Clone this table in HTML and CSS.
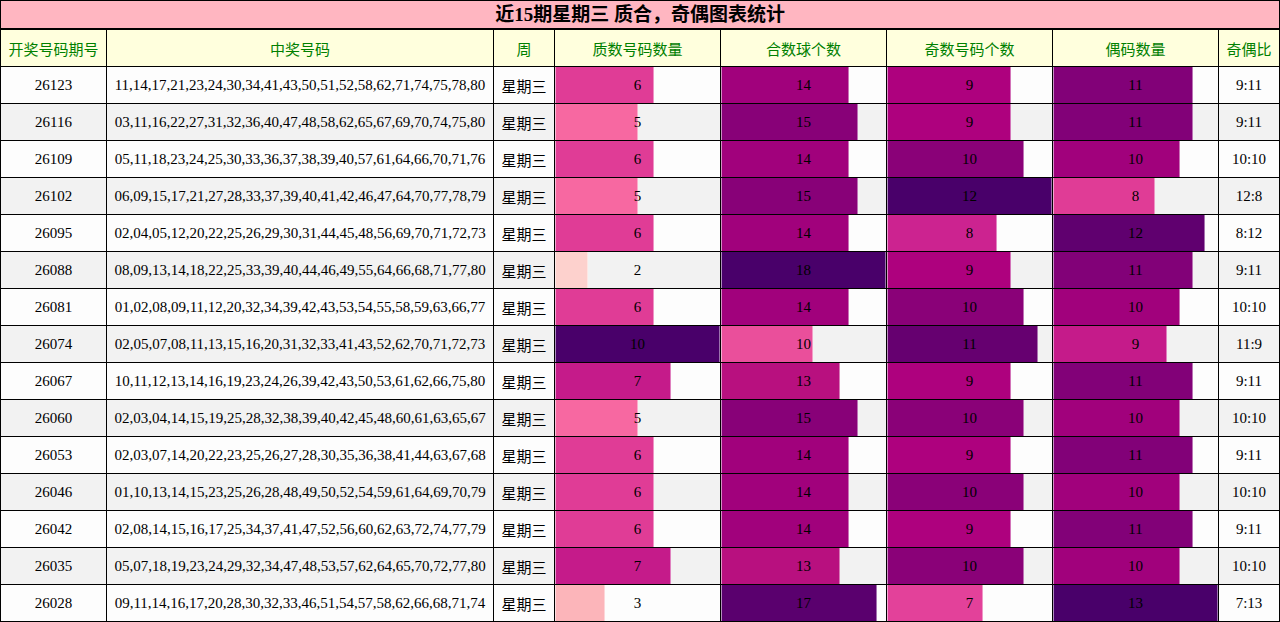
FILE: index.html
```html
<!DOCTYPE html>
<html lang="zh">
<head>
<meta charset="utf-8">
<title>近15期星期三 质合，奇偶图表统计</title>
<link rel="stylesheet" href="styles.css">
</head>
<body>
<table class="stats">
  <colgroup>
    <col class="c-issue"><col class="c-nums"><col class="c-week">
    <col class="c-bar"><col class="c-bar"><col class="c-bar"><col class="c-bar">
    <col class="c-ratio">
  </colgroup>
  <thead>
    <tr class="title-row"><th colspan="8">近15期星期三 质合，奇偶图表统计</th></tr>
    <tr class="head-row">
      <th>开奖号码期号</th><th>中奖号码</th><th>周</th><th>质数号码数量</th><th>合数球个数</th><th>奇数号码个数</th><th>偶码数量</th><th>奇偶比</th>
    </tr>
  </thead>
  <tbody>
    <tr>
      <td>26123</td><td>11,14,17,21,23,24,30,34,41,43,50,51,52,58,62,71,74,75,78,80</td><td class="wk">星期三</td>
      <td class="bar"><div class="wrap"><div class="fill" style="width:60%;background:#e03c96"></div><span class="lbl">6</span></div></td>
      <td class="bar"><div class="wrap"><div class="fill" style="width:77.78%;background:#a1017c"></div><span class="lbl">14</span></div></td>
      <td class="bar"><div class="wrap"><div class="fill" style="width:75%;background:#ae017e"></div><span class="lbl">9</span></div></td>
      <td class="bar"><div class="wrap"><div class="fill" style="width:84.62%;background:#820178"></div><span class="lbl">11</span></div></td>
      <td>9:11</td>
    </tr>
    <tr>
      <td>26116</td><td>03,11,16,22,27,31,32,36,40,47,48,58,62,65,67,69,70,74,75,80</td><td class="wk">星期三</td>
      <td class="bar"><div class="wrap"><div class="fill" style="width:50%;background:#f768a1"></div><span class="lbl">5</span></div></td>
      <td class="bar"><div class="wrap"><div class="fill" style="width:83.33%;background:#880178"></div><span class="lbl">15</span></div></td>
      <td class="bar"><div class="wrap"><div class="fill" style="width:75%;background:#ae017e"></div><span class="lbl">9</span></div></td>
      <td class="bar"><div class="wrap"><div class="fill" style="width:84.62%;background:#820178"></div><span class="lbl">11</span></div></td>
      <td>9:11</td>
    </tr>
    <tr>
      <td>26109</td><td>05,11,18,23,24,25,30,33,36,37,38,39,40,57,61,64,66,70,71,76</td><td class="wk">星期三</td>
      <td class="bar"><div class="wrap"><div class="fill" style="width:60%;background:#e03c96"></div><span class="lbl">6</span></div></td>
      <td class="bar"><div class="wrap"><div class="fill" style="width:77.78%;background:#a1017c"></div><span class="lbl">14</span></div></td>
      <td class="bar"><div class="wrap"><div class="fill" style="width:83.33%;background:#8a0178"></div><span class="lbl">10</span></div></td>
      <td class="bar"><div class="wrap"><div class="fill" style="width:76.92%;background:#a1017c"></div><span class="lbl">10</span></div></td>
      <td>10:10</td>
    </tr>
    <tr>
      <td>26102</td><td>06,09,15,17,21,27,28,33,37,39,40,41,42,46,47,64,70,77,78,79</td><td class="wk">星期三</td>
      <td class="bar"><div class="wrap"><div class="fill" style="width:50%;background:#f768a1"></div><span class="lbl">5</span></div></td>
      <td class="bar"><div class="wrap"><div class="fill" style="width:83.33%;background:#880178"></div><span class="lbl">15</span></div></td>
      <td class="bar"><div class="wrap"><div class="fill" style="width:100%;background:#49006a"></div><span class="lbl">12</span></div></td>
      <td class="bar"><div class="wrap"><div class="fill" style="width:61.54%;background:#e03c96"></div><span class="lbl">8</span></div></td>
      <td>12:8</td>
    </tr>
    <tr>
      <td>26095</td><td>02,04,05,12,20,22,25,26,29,30,31,44,45,48,56,69,70,71,72,73</td><td class="wk">星期三</td>
      <td class="bar"><div class="wrap"><div class="fill" style="width:60%;background:#e03c96"></div><span class="lbl">6</span></div></td>
      <td class="bar"><div class="wrap"><div class="fill" style="width:77.78%;background:#a1017c"></div><span class="lbl">14</span></div></td>
      <td class="bar"><div class="wrap"><div class="fill" style="width:66.67%;background:#cc2390"></div><span class="lbl">8</span></div></td>
      <td class="bar"><div class="wrap"><div class="fill" style="width:92.31%;background:#60006f"></div><span class="lbl">12</span></div></td>
      <td>8:12</td>
    </tr>
    <tr>
      <td>26088</td><td>08,09,13,14,18,22,25,33,39,40,44,46,49,55,64,66,68,71,77,80</td><td class="wk">星期三</td>
      <td class="bar"><div class="wrap"><div class="fill" style="width:20%;background:#fdd1cd"></div><span class="lbl">2</span></div></td>
      <td class="bar"><div class="wrap"><div class="fill" style="width:100%;background:#49006a"></div><span class="lbl">18</span></div></td>
      <td class="bar"><div class="wrap"><div class="fill" style="width:75%;background:#ae017e"></div><span class="lbl">9</span></div></td>
      <td class="bar"><div class="wrap"><div class="fill" style="width:84.62%;background:#820178"></div><span class="lbl">11</span></div></td>
      <td>9:11</td>
    </tr>
    <tr>
      <td>26081</td><td>01,02,08,09,11,12,20,32,34,39,42,43,53,54,55,58,59,63,66,77</td><td class="wk">星期三</td>
      <td class="bar"><div class="wrap"><div class="fill" style="width:60%;background:#e03c96"></div><span class="lbl">6</span></div></td>
      <td class="bar"><div class="wrap"><div class="fill" style="width:77.78%;background:#a1017c"></div><span class="lbl">14</span></div></td>
      <td class="bar"><div class="wrap"><div class="fill" style="width:83.33%;background:#8a0178"></div><span class="lbl">10</span></div></td>
      <td class="bar"><div class="wrap"><div class="fill" style="width:76.92%;background:#a1017c"></div><span class="lbl">10</span></div></td>
      <td>10:10</td>
    </tr>
    <tr>
      <td>26074</td><td>02,05,07,08,11,13,15,16,20,31,32,33,41,43,52,62,70,71,72,73</td><td class="wk">星期三</td>
      <td class="bar"><div class="wrap"><div class="fill" style="width:100%;background:#49006a"></div><span class="lbl">10</span></div></td>
      <td class="bar"><div class="wrap"><div class="fill" style="width:55.56%;background:#ea4f9b"></div><span class="lbl">10</span></div></td>
      <td class="bar"><div class="wrap"><div class="fill" style="width:91.67%;background:#660070"></div><span class="lbl">11</span></div></td>
      <td class="bar"><div class="wrap"><div class="fill" style="width:69.23%;background:#c51b8a"></div><span class="lbl">9</span></div></td>
      <td>11:9</td>
    </tr>
    <tr>
      <td>26067</td><td>10,11,12,13,14,16,19,23,24,26,39,42,43,50,53,61,62,66,75,80</td><td class="wk">星期三</td>
      <td class="bar"><div class="wrap"><div class="fill" style="width:70%;background:#c51b8a"></div><span class="lbl">7</span></div></td>
      <td class="bar"><div class="wrap"><div class="fill" style="width:72.22%;background:#b8107f"></div><span class="lbl">13</span></div></td>
      <td class="bar"><div class="wrap"><div class="fill" style="width:75%;background:#ae017e"></div><span class="lbl">9</span></div></td>
      <td class="bar"><div class="wrap"><div class="fill" style="width:84.62%;background:#820178"></div><span class="lbl">11</span></div></td>
      <td>9:11</td>
    </tr>
    <tr>
      <td>26060</td><td>02,03,04,14,15,19,25,28,32,38,39,40,42,45,48,60,61,63,65,67</td><td class="wk">星期三</td>
      <td class="bar"><div class="wrap"><div class="fill" style="width:50%;background:#f768a1"></div><span class="lbl">5</span></div></td>
      <td class="bar"><div class="wrap"><div class="fill" style="width:83.33%;background:#880178"></div><span class="lbl">15</span></div></td>
      <td class="bar"><div class="wrap"><div class="fill" style="width:83.33%;background:#8a0178"></div><span class="lbl">10</span></div></td>
      <td class="bar"><div class="wrap"><div class="fill" style="width:76.92%;background:#a1017c"></div><span class="lbl">10</span></div></td>
      <td>10:10</td>
    </tr>
    <tr>
      <td>26053</td><td>02,03,07,14,20,22,23,25,26,27,28,30,35,36,38,41,44,63,67,68</td><td class="wk">星期三</td>
      <td class="bar"><div class="wrap"><div class="fill" style="width:60%;background:#e03c96"></div><span class="lbl">6</span></div></td>
      <td class="bar"><div class="wrap"><div class="fill" style="width:77.78%;background:#a1017c"></div><span class="lbl">14</span></div></td>
      <td class="bar"><div class="wrap"><div class="fill" style="width:75%;background:#ae017e"></div><span class="lbl">9</span></div></td>
      <td class="bar"><div class="wrap"><div class="fill" style="width:84.62%;background:#820178"></div><span class="lbl">11</span></div></td>
      <td>9:11</td>
    </tr>
    <tr>
      <td>26046</td><td>01,10,13,14,15,23,25,26,28,48,49,50,52,54,59,61,64,69,70,79</td><td class="wk">星期三</td>
      <td class="bar"><div class="wrap"><div class="fill" style="width:60%;background:#e03c96"></div><span class="lbl">6</span></div></td>
      <td class="bar"><div class="wrap"><div class="fill" style="width:77.78%;background:#a1017c"></div><span class="lbl">14</span></div></td>
      <td class="bar"><div class="wrap"><div class="fill" style="width:83.33%;background:#8a0178"></div><span class="lbl">10</span></div></td>
      <td class="bar"><div class="wrap"><div class="fill" style="width:76.92%;background:#a1017c"></div><span class="lbl">10</span></div></td>
      <td>10:10</td>
    </tr>
    <tr>
      <td>26042</td><td>02,08,14,15,16,17,25,34,37,41,47,52,56,60,62,63,72,74,77,79</td><td class="wk">星期三</td>
      <td class="bar"><div class="wrap"><div class="fill" style="width:60%;background:#e03c96"></div><span class="lbl">6</span></div></td>
      <td class="bar"><div class="wrap"><div class="fill" style="width:77.78%;background:#a1017c"></div><span class="lbl">14</span></div></td>
      <td class="bar"><div class="wrap"><div class="fill" style="width:75%;background:#ae017e"></div><span class="lbl">9</span></div></td>
      <td class="bar"><div class="wrap"><div class="fill" style="width:84.62%;background:#820178"></div><span class="lbl">11</span></div></td>
      <td>9:11</td>
    </tr>
    <tr>
      <td>26035</td><td>05,07,18,19,23,24,29,32,34,47,48,53,57,62,64,65,70,72,77,80</td><td class="wk">星期三</td>
      <td class="bar"><div class="wrap"><div class="fill" style="width:70%;background:#c51b8a"></div><span class="lbl">7</span></div></td>
      <td class="bar"><div class="wrap"><div class="fill" style="width:72.22%;background:#b8107f"></div><span class="lbl">13</span></div></td>
      <td class="bar"><div class="wrap"><div class="fill" style="width:83.33%;background:#8a0178"></div><span class="lbl">10</span></div></td>
      <td class="bar"><div class="wrap"><div class="fill" style="width:76.92%;background:#a1017c"></div><span class="lbl">10</span></div></td>
      <td>10:10</td>
    </tr>
    <tr>
      <td>26028</td><td>09,11,14,16,17,20,28,30,32,33,46,51,54,57,58,62,66,68,71,74</td><td class="wk">星期三</td>
      <td class="bar"><div class="wrap"><div class="fill" style="width:30%;background:#fcb5ba"></div><span class="lbl">3</span></div></td>
      <td class="bar"><div class="wrap"><div class="fill" style="width:94.44%;background:#5a006e"></div><span class="lbl">17</span></div></td>
      <td class="bar"><div class="wrap"><div class="fill" style="width:58.33%;background:#e3419a"></div><span class="lbl">7</span></div></td>
      <td class="bar"><div class="wrap"><div class="fill" style="width:100%;background:#49006a"></div><span class="lbl">13</span></div></td>
      <td>7:13</td>
    </tr>
  </tbody>
</table>
</body>
</html>
```
FILE: styles.css
```css
html, body {
  margin: 0;
  padding: 0;
  background: #ffffff;
}

.stats {
  width: 1280px;
  border-collapse: collapse;
  table-layout: fixed;
  font-family: "Liberation Serif", "Noto Sans CJK SC", serif;
  font-size: 15px;
  color: #000;
}

.c-issue { width: 106px; }
.c-nums { width: 387px; }
.c-week { width: 61px; }
.c-bar { width: 166px; }
.c-ratio { width: 61px; }

.stats th,
.stats td {
  border: 1px solid #000;
  text-align: center;
  vertical-align: middle;
  padding: 0;
  white-space: nowrap;
  overflow: hidden;
}

.title-row th {
  height: 27px;
  background: #ffb6c1;
  font-size: 19px;
  font-weight: bold;
  font-family: "Liberation Serif", "Noto Sans CJK SC", serif;
  border-bottom: 2px solid #000;
  line-height: 27px;
}

.head-row th {
  height: 36px;
  background: #ffffdd;
  color: #008000;
  font-weight: normal;
  font-family: "Noto Sans CJK SC", sans-serif;
  font-size: 15px;
}

.stats tbody tr {
  height: 37px;
  background: #fdfdfd;
}

.stats tbody tr:nth-child(even) {
  background: #f2f2f2;
}

.stats tbody td {
  height: 36px;
}

.wk {
  font-family: "Noto Sans CJK SC", sans-serif;
}

.bar .wrap {
  display: grid;
  height: 36px;
}

.bar .fill {
  grid-area: 1 / 1;
  height: 100%;
  box-shadow: inset 1px 0 0 rgba(255, 255, 255, 0.55), inset -1px 0 0 rgba(255, 255, 255, 0.45);
}

.bar .lbl {
  grid-area: 1 / 1;
  justify-self: center;
  align-self: center;
}
```
